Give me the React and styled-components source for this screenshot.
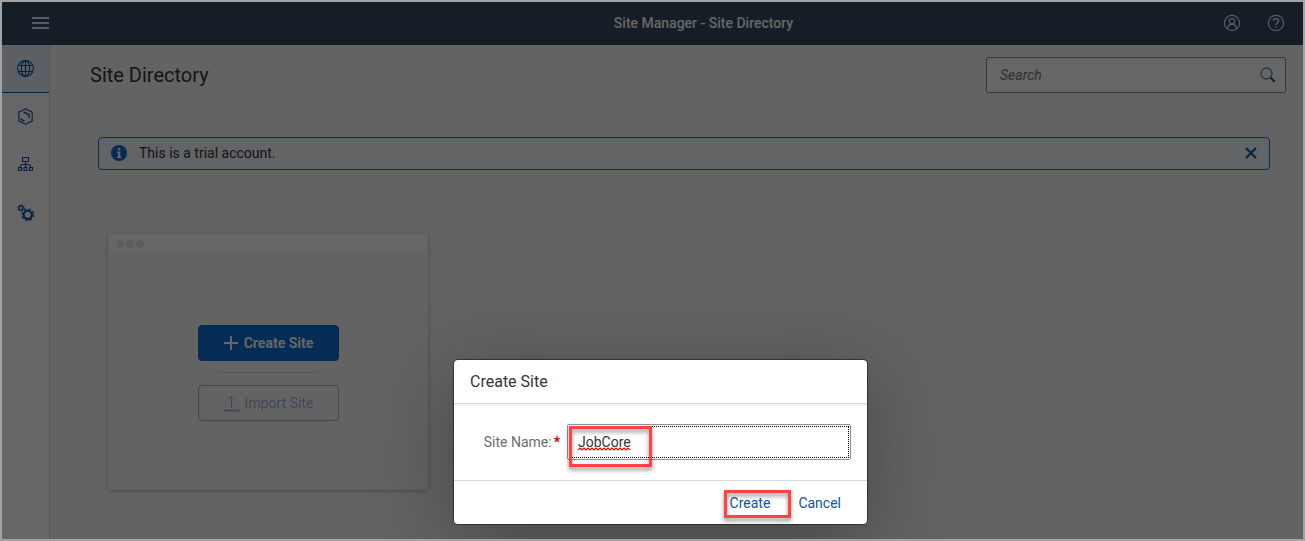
import React from 'react';
import styled, { createGlobalStyle } from 'styled-components';

const GlobalStyle = createGlobalStyle`
  *, *::before, *::after { box-sizing: border-box; }
  body {
    margin: 0;
    background: #f7f7f7;
    color: #32363a;
    font: 14px/20px Roboto, "Liberation Sans", sans-serif;
  }
  button, input { font: inherit; color: inherit; }
  button { cursor: pointer; padding: 0; border: 0; background: none; }
  svg { display: block; flex: none; }
`;

const Frame = styled.div`
  position: relative;
  display: flex;
  flex-direction: column;
  min-height: 100vh;
  border: 2px solid #a3a3a3;
  overflow: hidden;
`;

const ShellBar = styled.header`
  display: grid;
  grid-template-columns: 1fr auto 1fr;
  align-items: center;
  height: 43px;
  padding: 0 18px 2px 30px;
  background: #354a5f;
  color: #d1e8ff;
`;

const ShellTitle = styled.span`
  padding-left: 90px;
  color: #fff;
  font-weight: 500;
`;

const ShellActions = styled.div`
  display: flex;
  justify-content: flex-end;
  gap: 26px;
`;

const IconButton = styled.button`
  display: flex;
  color: ${(p) => p.$color || 'inherit'};
`;

const Body = styled.div`
  display: flex;
  flex: 1;
`;

const SideNav = styled.nav`
  width: 48px;
  flex: none;
  background: #fff;
  border-right: 1px solid #d9d9d9;
`;

const NavItem = styled.a`
  display: flex;
  align-items: center;
  justify-content: center;
  height: 48px;
  color: #0854a0;
  background: ${(p) => (p.$active ? '#e5f0fa' : 'transparent')};
  border-bottom: 1px solid ${(p) => (p.$active ? '#0854a0' : 'transparent')};
`;

const Main = styled.main`
  flex: 1;
  min-width: 0;
`;

const PageHeader = styled.div`
  display: flex;
  align-items: center;
  justify-content: space-between;
  padding: 12px 17px 0 40px;
`;

const PageTitle = styled.h1`
  margin: 0;
  font-size: 20px;
  line-height: 24px;
  font-weight: 400;
`;

const SearchField = styled.label`
  display: flex;
  align-items: center;
  width: 300px;
  height: 36px;
  padding: 0 9px 0 13px;
  border: 1px solid #89919a;
  border-radius: 2px;
  background: #fff;
  color: #0854a0;
`;

const SearchInput = styled.input`
  flex: 1;
  min-width: 0;
  padding: 0;
  border: 0;
  outline: 0;
  background: none;
  color: #32363a;
  &::placeholder { color: #74777a; font-style: italic; opacity: 1; }
`;

const Content = styled.div`
  padding: 44px 33px 32px 48px;
`;

const MessageStrip = styled.div`
  display: flex;
  align-items: center;
  gap: 12px;
  height: 33px;
  padding: 0 12px 1px;
  border: 1px solid #0a6ed1;
  border-radius: 4px;
  background: #f5faff;
`;

const MessageText = styled.span`
  flex: 1;
`;

const SiteCard = styled.section`
  width: 320px;
  height: 256px;
  margin: 64px 0 0 10px;
  display: flex;
  flex-direction: column;
  border-radius: 4px;
  background: #f7f7f7;
  box-shadow: 0 1px 4px rgba(0, 0, 0, 0.3);
`;

const CardBar = styled.div`
  display: flex;
  align-items: center;
  gap: 2px;
  height: 18px;
  padding: 2px 8px 0;
  border-radius: 4px 4px 0 0;
  background: #fff;
`;

const Dot = styled.i`
  width: 8px;
  height: 8px;
  border-radius: 50%;
  background: #e5e8eb;
`;

const CardBody = styled.div`
  display: flex;
  flex-direction: column;
  align-items: center;
  padding-top: 73px;
`;

const CardButton = styled.button`
  display: flex;
  align-items: center;
  justify-content: center;
  gap: 5px;
  width: 141px;
  height: 36px;
  border: 1px solid #0a6ed1;
  border-radius: 4px;
  background: ${(p) => (p.$primary ? '#0a6ed1' : 'transparent')};
  color: ${(p) => (p.$primary ? '#fff' : '#0854a0')};
  font-weight: ${(p) => (p.$primary ? 700 : 400)};
  &:disabled { opacity: 0.4; border-color: #0854a0; }
`;

const CardDivider = styled.hr`
  width: 100px;
  height: 1px;
  margin: 11px 0 12px;
  border: 0;
  background: #d9d9d9;
`;

const Overlay = styled.div`
  position: absolute;
  inset: 0;
  display: flex;
  align-items: flex-end;
  justify-content: center;
  padding: 0 0 15px 16px;
  background: rgba(0, 0, 0, 0.6);
`;

const Dialog = styled.form`
  width: 413px;
  border-radius: 4px;
  background: #fff;
  box-shadow: 0 0 0 1px rgba(0, 0, 0, 0.42), 0 16px 80px rgba(0, 0, 0, 0.3);
`;

const DialogHeader = styled.header`
  height: 44px;
  padding: 0 16px;
  border-bottom: 1px solid #d9d9d9;
  box-shadow: 0 1px 2px rgba(0, 0, 0, 0.08);
`;

const DialogTitle = styled.h2`
  margin: 0;
  font-size: 16px;
  line-height: 43px;
  font-weight: 400;
`;

const DialogBody = styled.div`
  display: flex;
  align-items: center;
  justify-content: flex-end;
  gap: 7px;
  padding: 20px 16px;
`;

const FieldLabel = styled.label`
  display: flex;
  gap: 2px;
  color: #6a6d70;
`;

const Required = styled.span`
  color: #bb0000;
  font-weight: 700;
`;

const Highlighted = styled.span`
  position: relative;
  display: flex;
`;

const Highlight = styled.span`
  position: absolute;
  top: ${(p) => p.$top}px;
  left: ${(p) => p.$left}px;
  width: ${(p) => p.$width}px;
  height: ${(p) => p.$height}px;
  border: 3px solid #ff4343;
  filter: drop-shadow(0 3px 2px rgba(0, 0, 0, 0.45));
  pointer-events: none;
`;

const NameInput = styled.input`
  width: 284px;
  height: 36px;
  padding: 0 10px;
  border: 1px solid #89919a;
  border-radius: 2px;
  background: #fff;
  outline: 1px dotted #000;
  outline-offset: -3px;
`;

const Squiggle = styled.svg`
  position: absolute;
  left: 11px;
  top: 23px;
  pointer-events: none;
`;

const DialogFooter = styled.footer`
  display: flex;
  align-items: center;
  justify-content: flex-end;
  gap: 28px;
  height: 44px;
  padding: 0 26px;
  border-top: 1px solid #d9d9d9;
`;

const LinkButton = styled.button`
  color: #0854a0;
`;

const stroke = { fill: 'none', stroke: 'currentColor', strokeWidth: 1 };

const MenuIcon = () => (
  <svg width="17" height="12" viewBox="0 0 17 12" fill="currentColor" aria-hidden="true">
    <path d="M0 0h17v2H0zM0 5h17v2H0zM0 10h17v2H0z" />
  </svg>
);

const UserIcon = () => (
  <svg width="18" height="18" viewBox="0 0 18 18" {...stroke} strokeWidth="1.2" aria-hidden="true">
    <circle cx="9" cy="9" r="7.6" />
    <circle cx="9" cy="7.3" r="2.7" />
    <path d="M4.5 14.8c.2-2.7 1.6-4.1 3-4.5h3c1.4.4 2.8 1.8 3 4.5" />
  </svg>
);

const HelpIcon = () => (
  <svg width="18" height="18" viewBox="0 0 18 18" {...stroke} strokeWidth="1.2" aria-hidden="true">
    <circle cx="9" cy="9" r="7.6" />
    <path d="M6.5 7c0-1.7 1-2.6 2.5-2.6s2.6.9 2.6 2.3c0 1.9-2.5 2-2.5 4.3" strokeWidth="1.5" />
    <path d="M8.2 12.4h1.7v1.4H8.2z" fill="currentColor" stroke="none" />
  </svg>
);

const GlobeIcon = () => (
  <svg width="17" height="17" viewBox="0 0 17 17" {...stroke} strokeWidth="1.1" aria-hidden="true">
    <circle cx="8.5" cy="8.5" r="7.9" />
    <ellipse cx="8.5" cy="8.5" rx="4.2" ry="7.9" />
    <path d="M8.5 .6v15.800M1.300 5.500h14.400M1.300 11.500h14.400" />
  </svg>
);

const HexIcon = () => (
  <svg width="17" height="17" viewBox="0 0 17 17" {...stroke} strokeWidth="1.100" aria-hidden="true">
    <path d="M8.500 .8l6.700 3.400v8.600l-6.700 3.400-6.700-3.400V4.200z" />
    <path d="M6.500 4l5.500 2.700v3.600M3.600 10.300l1.200 1.500 2.700 1.200" strokeWidth="1.400" />
  </svg>
);

const SitemapIcon = () => (
  <svg width="17" height="17" viewBox="0 0 17 17" {...stroke} strokeWidth="1.100" aria-hidden="true">
    <path d="M5.500 1.500h6v4h-6zM8.500 5.500v6M3.500 11.500v-1.500q0-1.500 1.500-1.500h7q1.500 0 1.500 1.500v1.500" />
    <path d="M1.500 11.500h3v3h-3zM7 11.500h3v3h-3zM12.500 11.500h3v3h-3z" />
  </svg>
);

const GearsIcon = () => (
  <svg width="17" height="17" viewBox="0 0 17 17" {...stroke} aria-hidden="true">
    <circle cx="4" cy="4" r="2" strokeWidth="1.300" />
    <circle cx="4" cy="4" r="3.100" strokeWidth="1.200" strokeDasharray="1.300 1.135" />
    <circle cx="10.800" cy="10.800" r="4.100" strokeWidth="2.100" />
    <circle cx="10.800" cy="10.800" r="5.600" strokeWidth="1.600" strokeDasharray="2.200 2.200" />
  </svg>
);

const SearchIcon = () => (
  <svg width="16" height="16" viewBox="0 0 16 16" {...stroke} aria-hidden="true">
    <circle cx="6.5" cy="6.5" r="5.5" />
    <path d="M10.500 10.500l4.300 4.200" strokeWidth="2" />
  </svg>
);

const InfoIcon = () => (
  <svg width="16" height="16" viewBox="0 0 16 16" aria-hidden="true">
    <circle cx="8" cy="8" r="8" fill="#0a6ed1" />
    <path d="M7 3h2.300v2.200H7zM6 6.400h3.300v5.100h1V13H6v-1.500h1V7.900H6z" fill="#fff" />
  </svg>
);

const CloseIcon = () => (
  <svg width="12" height="12" viewBox="0 0 12 12" {...stroke} strokeWidth="2" aria-hidden="true">
    <path d="M1 1l10 10M11 1L1 11" />
  </svg>
);

const PlusIcon = () => (
  <svg width="16" height="16" viewBox="0 0 16 16" {...stroke} strokeWidth="2" aria-hidden="true">
    <path d="M8 1v14M1 8h14" />
  </svg>
);

const UploadIcon = () => (
  <svg width="17" height="17" viewBox="0 0 17 17" {...stroke} aria-hidden="true">
    <path d="M8.500 13V1.200M4.500 5l4-4 4 4" />
    <path d="M.5 15.500h16" strokeWidth="2" />
  </svg>
);

const SpellingMark = () => (
  <Squiggle width="53" height="4" viewBox="0 0 53 4" fill="none" stroke="#f00" strokeWidth="1.200" aria-hidden="true">
    <path d={`M0 3${'l2-2l2 2'.repeat(13)}`} />
  </Squiggle>
);

const navItems = [
  { label: 'Site Directory', Icon: GlobeIcon, active: true },
  { label: 'Content Manager', Icon: HexIcon },
  { label: 'Channel Manager', Icon: SitemapIcon },
  { label: 'Settings', Icon: GearsIcon },
];

export default function App() {
  return (
    <>
      <GlobalStyle />
      <Frame>
        <ShellBar>
          <IconButton aria-label="Menu"><MenuIcon /></IconButton>
          <ShellTitle>Site Manager - Site Directory</ShellTitle>
          <ShellActions>
            <IconButton aria-label="User"><UserIcon /></IconButton>
            <IconButton aria-label="Help"><HelpIcon /></IconButton>
          </ShellActions>
        </ShellBar>
        <Body>
          <SideNav>
            {navItems.map(({ label, Icon, active }) => (
              <NavItem key={label} href="#" aria-label={label} $active={active}><Icon /></NavItem>
            ))}
          </SideNav>
          <Main>
            <PageHeader>
              <PageTitle>Site Directory</PageTitle>
              <SearchField>
                <SearchInput type="text" placeholder="Search" aria-label="Search" />
                <SearchIcon />
              </SearchField>
            </PageHeader>
            <Content>
              <MessageStrip role="status">
                <InfoIcon />
                <MessageText>This is a trial account.</MessageText>
                <IconButton aria-label="Close" $color="#0854a0"><CloseIcon /></IconButton>
              </MessageStrip>
              <SiteCard>
                <CardBar><Dot /><Dot /><Dot /></CardBar>
                <CardBody>
                  <CardButton $primary><PlusIcon />Create Site</CardButton>
                  <CardDivider />
                  <CardButton disabled><UploadIcon />Import Site</CardButton>
                </CardBody>
              </SiteCard>
            </Content>
          </Main>
        </Body>
        <Overlay>
          <Dialog role="dialog" aria-labelledby="dialog-title" onSubmit={(e) => e.preventDefault()}>
            <DialogHeader><DialogTitle id="dialog-title">Create Site</DialogTitle></DialogHeader>
            <DialogBody>
              <FieldLabel htmlFor="site-name">Site Name:<Required>*</Required></FieldLabel>
              <Highlighted>
                <NameInput id="site-name" type="text" defaultValue="JobCore" spellCheck={false} />
                <SpellingMark />
                <Highlight $top={2} $left={2} $width={83} $height={41} />
              </Highlighted>
            </DialogBody>
            <DialogFooter>
              <Highlighted>
                <LinkButton type="submit">Create</LinkButton>
                <Highlight $top={-3} $left={-6} $width={67} $height={28} />
              </Highlighted>
              <LinkButton type="button">Cancel</LinkButton>
            </DialogFooter>
          </Dialog>
        </Overlay>
      </Frame>
    </>
  );
}
